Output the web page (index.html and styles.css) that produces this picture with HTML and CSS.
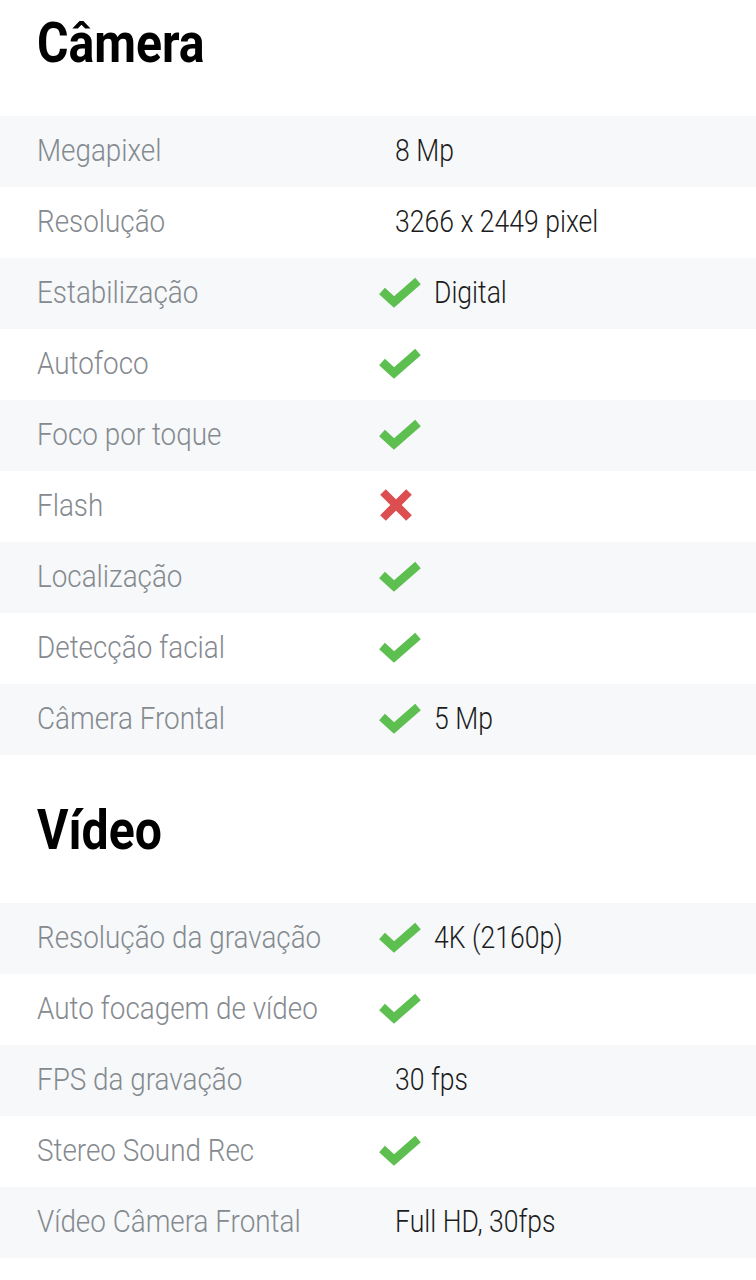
FILE: index.html
```html
<!DOCTYPE html>
<html lang="pt">
<head>
    <meta charset="UTF-8">
    <title>Câmera e Vídeo</title>
    <link rel="stylesheet" href="styles.css">
</head>
<body>
    <div class="specs">
        <section class="spec-group">
            <h2><span class="txt">Câmera</span></h2>
            <div class="row"><div class="label"><span class="txt">Megapixel</span></div><div class="value"><span class="txt plain">8 Mp</span></div></div>
            <div class="row"><div class="label"><span class="txt">Resolução</span></div><div class="value"><span class="txt plain">3266 x 2449 pixel</span></div></div>
            <div class="row"><div class="label"><span class="txt">Estabilização</span></div><div class="value"><svg class="icon yes" viewBox="0 0 44 32"><polyline points="4,15 16,26 40,5"/></svg><span class="txt">Digital</span></div></div>
            <div class="row"><div class="label"><span class="txt">Autofoco</span></div><div class="value"><svg class="icon yes" viewBox="0 0 44 32"><polyline points="4,15 16,26 40,5"/></svg></div></div>
            <div class="row"><div class="label"><span class="txt">Foco por toque</span></div><div class="value"><svg class="icon yes" viewBox="0 0 44 32"><polyline points="4,15 16,26 40,5"/></svg></div></div>
            <div class="row"><div class="label"><span class="txt">Flash</span></div><div class="value"><svg class="icon no" viewBox="0 0 36 36"><path d="M5 5 L31 31 M31 5 L5 31"/></svg></div></div>
            <div class="row"><div class="label"><span class="txt">Localização</span></div><div class="value"><svg class="icon yes" viewBox="0 0 44 32"><polyline points="4,15 16,26 40,5"/></svg></div></div>
            <div class="row"><div class="label"><span class="txt">Detecção facial</span></div><div class="value"><svg class="icon yes" viewBox="0 0 44 32"><polyline points="4,15 16,26 40,5"/></svg></div></div>
            <div class="row"><div class="label"><span class="txt">Câmera Frontal</span></div><div class="value"><svg class="icon yes" viewBox="0 0 44 32"><polyline points="4,15 16,26 40,5"/></svg><span class="txt">5 Mp</span></div></div>
        </section>

        <section class="spec-group">
            <h2><span class="txt">Vídeo</span></h2>
            <div class="row"><div class="label"><span class="txt">Resolução da gravação</span></div><div class="value"><svg class="icon yes" viewBox="0 0 44 32"><polyline points="4,15 16,26 40,5"/></svg><span class="txt">4K (2160p)</span></div></div>
            <div class="row"><div class="label"><span class="txt">Auto focagem de vídeo</span></div><div class="value"><svg class="icon yes" viewBox="0 0 44 32"><polyline points="4,15 16,26 40,5"/></svg></div></div>
            <div class="row"><div class="label"><span class="txt">FPS da gravação</span></div><div class="value"><span class="txt plain">30 fps</span></div></div>
            <div class="row"><div class="label"><span class="txt">Stereo Sound Rec</span></div><div class="value"><svg class="icon yes" viewBox="0 0 44 32"><polyline points="4,15 16,26 40,5"/></svg></div></div>
            <div class="row"><div class="label"><span class="txt">Vídeo Câmera Frontal</span></div><div class="value"><span class="txt plain">Full HD, 30fps</span></div></div>
        </section>
    </div>
</body>
</html>
```

FILE: styles.css
```css
body {
    margin: 0;
    padding: 0;
    background-color: #fff;
    font-family: 'Roboto', 'Liberation Sans', sans-serif;
}
.specs {
    padding-top: 15px;
}
.spec-group + .spec-group {
    margin-top: 47px;
}
.spec-group h2 {
    margin: 0 0 45px;
    padding-left: 37px;
    font-size: 56px;
    line-height: 1;
    font-weight: 700;
    color: #000;
}
.spec-group h2 .txt {
    transform: scaleX(0.86);
}
.txt {
    display: inline-block;
    white-space: nowrap;
    transform: scaleX(0.83);
    transform-origin: left center;
}
.row {
    display: flex;
    align-items: center;
    height: 71px;
    font-size: 32px;
    font-weight: 300;
}
.row:nth-of-type(odd) {
    background-color: #f6f8fa;
}
.label {
    width: 341px;
    padding-left: 37px;
    padding-bottom: 3px;
    color: #858a8f;
}
.label .txt {
    transform: scaleX(0.87);
}
.value {
    display: flex;
    align-items: center;
    padding-bottom: 3px;
    color: #1c1c1c;
}
.value .plain {
    margin-left: 17px;
}
.icon {
    flex: none;
    fill: none;
}
.icon.yes {
    width: 44px;
    height: 32px;
    margin-right: 12px;
    stroke: #5cbf4f;
    stroke-width: 8.5;
}
.icon.no {
    width: 36px;
    height: 36px;
    stroke: #dc4e50;
    stroke-width: 8;
}
```
